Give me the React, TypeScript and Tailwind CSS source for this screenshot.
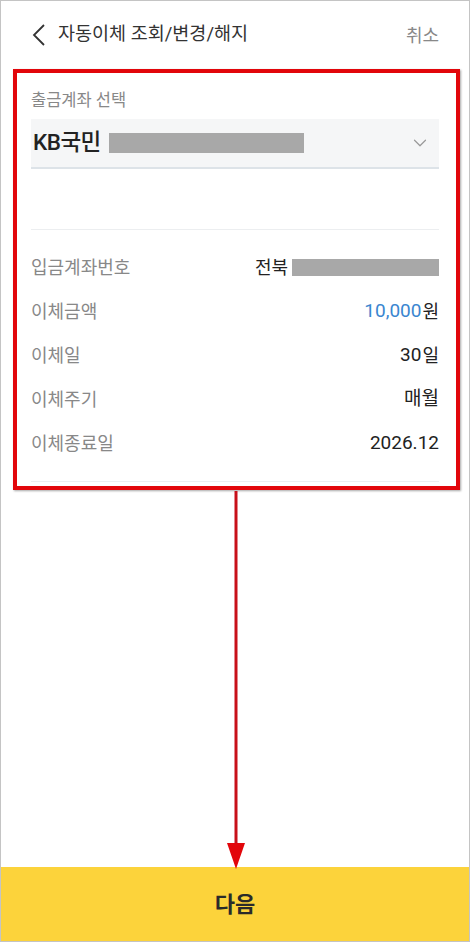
import { ChevronDown } from "lucide-react";

const rows = [
  { label: "입금계좌번호", kind: "account" },
  { label: "이체금액", kind: "amount" },
  { label: "이체일", kind: "text", value: "30", unit: "일" },
  { label: "이체주기", kind: "text", value: "매월" },
  { label: "이체종료일", kind: "text", value: "2026.12" },
];

function Masked({ className }: { className: string }) {
  return <span className={`inline-block bg-[#a8a8a8] ${className}`} />;
}

export default function App() {
  return (
    <div
      className="relative flex h-[942px] w-[470px] flex-col overflow-hidden border border-[#c4c4c4] bg-white text-[#222]"
      style={{ fontFamily: "Roboto, 'Noto Sans CJK KR', sans-serif" }}
    >
      {/* Header */}
      <header className="flex h-[68px] shrink-0 items-center pl-[30px] pr-[30px]">
        <svg width="16" height="24" viewBox="0 0 16 24" className="text-[#333]">
          <polyline points="13,2 3,12 13,22" fill="none" stroke="currentColor" strokeWidth="1.8" />
        </svg>
        <h1 className="ml-[11px] flex-1 text-[18.5px] text-[#333]">자동이체 조회/변경/해지</h1>
        <button className="text-[18px] text-[#888]">취소</button>
      </header>

      <main className="flex-1 px-[30px]">
        <p className="mt-[20px] text-[16.5px] leading-[24px] text-[#888]">출금계좌 선택</p>

        {/* Account selector */}
        <div className="mt-[6px] flex h-[50px] items-center border-b-2 border-[#dde3e8] bg-[#f5f6f7] pl-[2px] pr-[8px]">
          <span className="text-[22.5px] font-medium tracking-[-0.5px] text-[#222]">KB국민</span>
          <Masked className="ml-[8px] h-[20px] w-[195px]" />
          <ChevronDown className="ml-auto h-[22px] w-[22px] text-[#999]" strokeWidth={1.3} />
        </div>

        <div className="mt-[60px] h-px bg-[#eceef0]" />

        <dl className="mt-[15px] flex flex-col">
          {rows.map((row) => (
            <div key={row.label} className="flex h-[44px] items-center justify-between">
              <dt className="text-[18px] text-[#888]">{row.label}</dt>
              <dd className="flex items-center text-[18px] text-[#222]">
                {row.kind === "account" && (
                  <>
                    <span>전북</span>
                    <Masked className="ml-[4px] h-[17px] w-[147px]" />
                  </>
                )}
                {row.kind === "amount" && (
                  <>
                    <span className="text-[19px] text-[#3a86d0]">10,000</span>
                    <span className="ml-[1px]">원</span>
                  </>
                )}
                {row.kind === "text" && (
                  <>
                    <span className="text-[19px]">{row.value}</span>
                    {row.unit && <span className="ml-[1px]">{row.unit}</span>}
                  </>
                )}
              </dd>
            </div>
          ))}
        </dl>

        <div className="mt-[16px] h-px bg-[#eceef0]" />
      </main>

      <button className="h-[74px] w-full shrink-0 bg-[#fcd33b] text-[22px] font-bold text-[#2a2a2a]">다음</button>

      {/* Highlight frame */}
      <div className="pointer-events-none absolute left-[12px] top-[68px] h-[421px] w-[447px] border-[4px] border-[#e2060b] shadow-[1px_1px_2px_rgba(0,0,0,0.35)]" />

      {/* Pointer arrow */}
      <svg
        className="pointer-events-none absolute left-[224px] top-[490px]"
        width="22"
        height="380"
        viewBox="0 0 22 380"
      >
        <line x1="11" y1="0" x2="11" y2="362" stroke="#c8101a" strokeWidth="3" />
        <polygon points="2,352 20,352 11,378" fill="#e2060b" />
      </svg>
    </div>
  );
}
